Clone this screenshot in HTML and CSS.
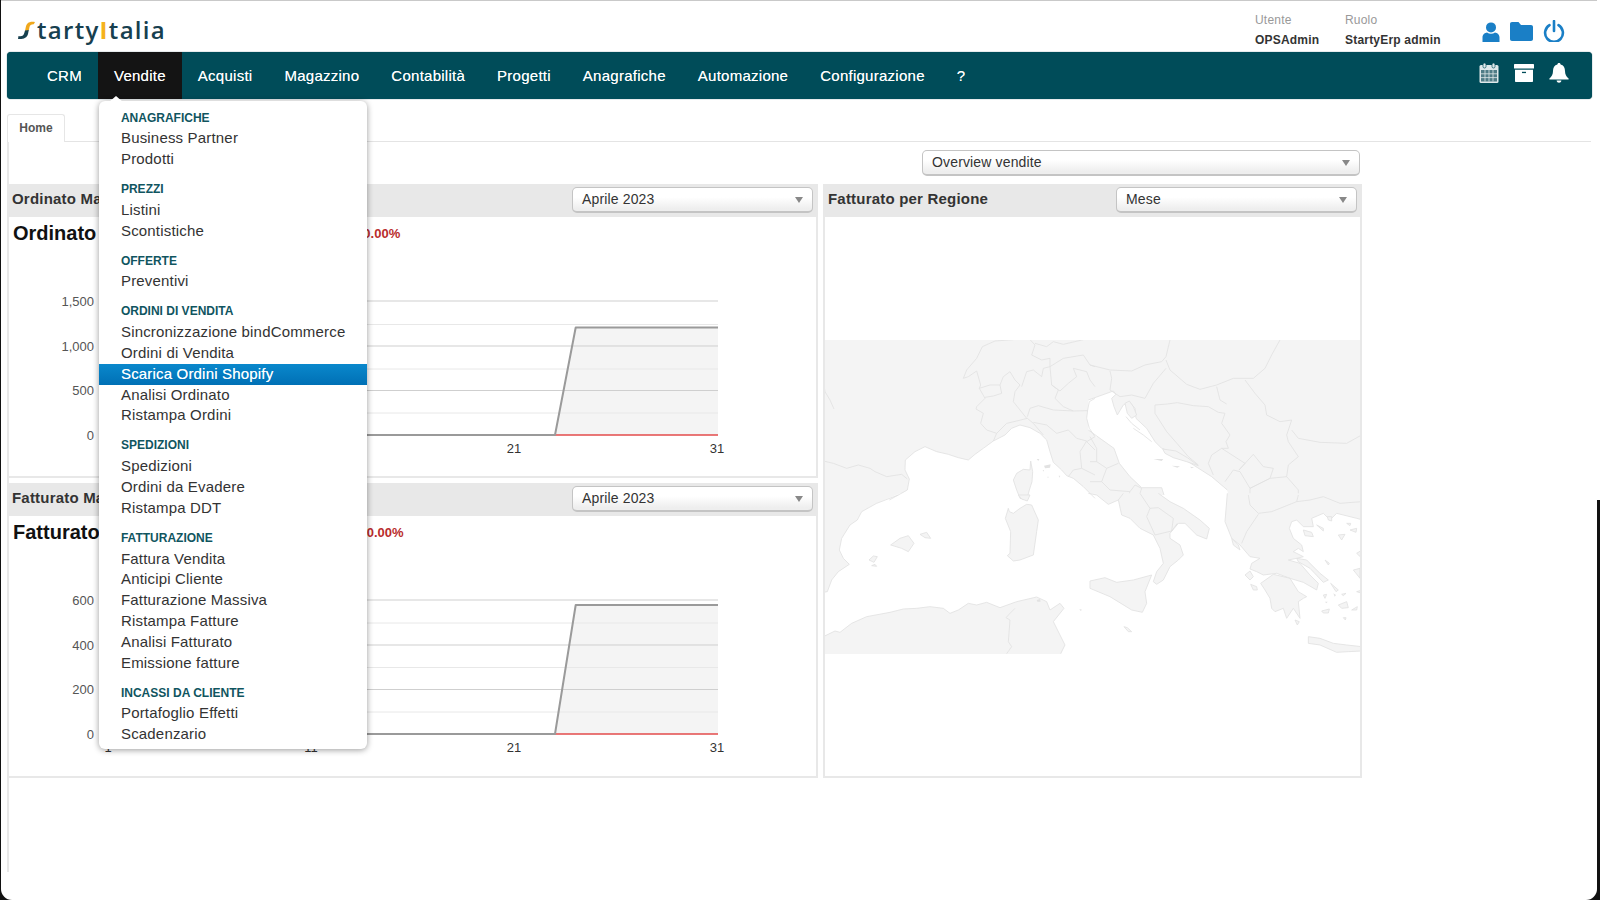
FILE: index.html
```html
<!DOCTYPE html>
<html lang="it">
<head>
<meta charset="utf-8">
<title>StartyItalia</title>
<link rel="stylesheet" href="styles.css">
</head>
<body>
<div class="page">
  <header class="top">
    <div class="logo">
      <svg class="logo-s" viewBox="0 0 18 20" width="18" height="20"><path class="s-y" d="M17 1C11 0 8.5 2.5 7.8 6L7 10 10.8 9.5 11.5 6C12 4 13.5 3 15.8 3.2Z"/><path class="s-d" d="M7 9.5 6.3 12C5.8 14.5 3.5 16 0.5 15L0 18C5 18.5 9 17 10 13L10.8 9Z"/></svg>
      <span class="logo-text">tarty<span class="logo-bar">I</span>talia</span>
    </div>
    <div class="userinfo">
      <div class="info info-user"><span class="info-l">Utente</span><b>OPSAdmin</b></div>
      <div class="info info-role"><span class="info-l">Ruolo</span><b>StartyErp admin</b></div>
      <div class="topicons">
        <svg class="ic-user" viewBox="0 0 18 20" width="18" height="20"><circle cx="9" cy="5.4" r="5"/><path d="M0.5 20V15.5C0.5 12.5 3 10.8 5 10.6 6.2 11.4 7.5 11.8 9 11.8S11.8 11.4 13 10.6C15 10.8 17.5 12.5 17.5 15.5V20Z"/></svg>
        <svg class="ic-folder" viewBox="0 0 23 19" width="23" height="19"><path d="M2 0H8.5L11 3H21C22.2 3 23 3.8 23 5V17C23 18.2 22.2 19 21 19H2C0.8 19 0 18.2 0 17V2C0 0.8 0.8 0 2 0Z"/></svg>
        <svg class="ic-power" viewBox="0 0 22 22" width="22" height="22"><path d="M6.5 5.2A8.9 8.9 0 1 0 15.5 5.2"/><path d="M11 1V11"/></svg>
      </div>
    </div>
  </header>

  <nav class="nav">
    <ul class="nav-list">
      <li class="nav-item">CRM</li>
      <li class="nav-item nav-active">Vendite
        <div class="menu">
          <div class="m-group">
            <div class="m-head">Anagrafiche</div>
            <div class="m-item">Business Partner</div>
            <div class="m-item">Prodotti</div>
          </div>
          <div class="m-group">
            <div class="m-head">Prezzi</div>
            <div class="m-item">Listini</div>
            <div class="m-item">Scontistiche</div>
          </div>
          <div class="m-group">
            <div class="m-head">Offerte</div>
            <div class="m-item">Preventivi</div>
          </div>
          <div class="m-group">
            <div class="m-head">Ordini di vendita</div>
            <div class="m-item">Sincronizzazione bindCommerce</div>
            <div class="m-item">Ordini di Vendita</div>
            <div class="m-item m-sel">Scarica Ordini Shopify</div>
            <div class="m-item">Analisi Ordinato</div>
            <div class="m-item">Ristampa Ordini</div>
          </div>
          <div class="m-group">
            <div class="m-head">Spedizioni</div>
            <div class="m-item">Spedizioni</div>
            <div class="m-item">Ordini da Evadere</div>
            <div class="m-item">Ristampa DDT</div>
          </div>
          <div class="m-group">
            <div class="m-head">Fatturazione</div>
            <div class="m-item">Fattura Vendita</div>
            <div class="m-item">Anticipi Cliente</div>
            <div class="m-item">Fatturazione Massiva</div>
            <div class="m-item">Ristampa Fatture</div>
            <div class="m-item">Analisi Fatturato</div>
            <div class="m-item">Emissione fatture</div>
          </div>
          <div class="m-group">
            <div class="m-head">Incassi da cliente</div>
            <div class="m-item">Portafoglio Effetti</div>
            <div class="m-item">Scadenzario</div>
          </div>
        </div>
      </li>
      <li class="nav-item">Acquisti</li>
      <li class="nav-item">Magazzino</li>
      <li class="nav-item">Contabilità</li>
      <li class="nav-item">Progetti</li>
      <li class="nav-item">Anagrafiche</li>
      <li class="nav-item">Automazione</li>
      <li class="nav-item">Configurazione</li>
      <li class="nav-item">?</li>
    </ul>
    <div class="nav-icons">
      <svg class="ic-cal" viewBox="0 0 20 20" width="20" height="20"><rect class="cal-bg" x="0.5" y="2" width="19" height="18" rx="1.5"/><rect class="cal-grid" x="2" y="7" width="16" height="11.5"/><path class="cal-lines" d="M6 7V18.5M10 7V18.5M14 7V18.5M2 10.8H18M2 14.6H18"/><rect class="cal-ring" x="4" y="0" width="3" height="5" rx="1.5"/><rect class="cal-ring" x="13" y="0" width="3" height="5" rx="1.5"/></svg>
      <svg class="ic-arch" viewBox="0 0 20 18" width="20" height="18"><rect class="wh" x="0" y="0" width="20" height="4.5" rx="0.6"/><path class="wh" d="M1 5.8H19V17C19 17.6 18.6 18 18 18H2C1.4 18 1 17.6 1 17Z"/><rect class="teal" x="8" y="7.8" width="4" height="1.3"/></svg>
      <svg class="ic-bell" viewBox="0 0 20 20" width="20" height="20"><path class="wh" d="M10 0C11 0 11.6 0.7 11.6 1.6 14.6 2.3 16 4.8 16 8 16 11.5 17.2 13.5 19.6 15.6V16.6H0.4V15.6C2.8 13.5 4 11.5 4 8 4 4.8 5.4 2.3 8.4 1.6 8.4 0.7 9 0 10 0Z"/><path class="wh" d="M7.6 17.6H12.4C12.2 19 11.2 19.8 10 19.8S7.8 19 7.6 17.6Z"/></svg>
    </div>
  </nav>

  <div class="tabs"><div class="tab">Home</div></div>

  <main class="content">
    <div class="toolbar">
      <div class="select select-wide"><span>Overview vendite</span><i class="caret"></i></div>
    </div>
    <div class="dash">
      <div class="col">
        <section class="panel panel-l panel-a">
          <div class="p-head"><h3>Ordinato Ma</h3><div class="select"><span>Aprile 2023</span><i class="caret"></i></div></div>
          <div class="p-title"><strong>Ordinato</strong><em>0.00%</em></div>
          <svg class="chart" viewBox="9 241 807 235" width="807" height="235">
            <polygon class="c-area" points="555,435 575.7,327.5 718,327.5 718,435"/>
            <path class="c-minor" d="M108 324.5H718M108 369H718M108 413H718"/>
            <path class="c-major" d="M108 301H718M108 346H718M108 390.5H718"/>
            <path class="c-red" d="M108 435H718"/>
            <polyline class="c-line" points="108,435 555,435 575.7,327.5 718,327.5"/>
            <text class="c-y" x="94" y="306">1,500</text>
            <text class="c-y" x="94" y="351">1,000</text>
            <text class="c-y" x="94" y="395">500</text>
            <text class="c-y" x="94" y="440">0</text>
            <text class="c-x" x="108" y="453">1</text>
            <text class="c-x" x="311" y="453">11</text>
            <text class="c-x" x="514" y="453">21</text>
            <text class="c-x" x="717" y="453">31</text>
          </svg>
        </section>
        <section class="panel panel-l panel-b">
          <div class="p-head"><h3>Fatturato Ma</h3><div class="select"><span>Aprile 2023</span><i class="caret"></i></div></div>
          <div class="p-title"><strong>Fatturato</strong><em>0.00%</em></div>
          <svg class="chart" viewBox="9 540 807 236" width="807" height="236">
            <polygon class="c-area" points="555,734 575.7,605 718,605 718,734"/>
            <path class="c-minor" d="M108 623H718M108 667.5H718M108 712H718"/>
            <path class="c-major" d="M108 600H718M108 645H718M108 689.5H718"/>
            <path class="c-red" d="M108 734H718"/>
            <polyline class="c-line" points="108,734 555,734 575.7,605 718,605"/>
            <text class="c-y" x="94" y="605">600</text>
            <text class="c-y" x="94" y="650">400</text>
            <text class="c-y" x="94" y="694">200</text>
            <text class="c-y" x="94" y="739">0</text>
            <text class="c-x" x="108" y="752">1</text>
            <text class="c-x" x="311" y="752">11</text>
            <text class="c-x" x="514" y="752">21</text>
            <text class="c-x" x="717" y="752">31</text>
          </svg>
        </section>
      </div>
      <section class="panel panel-r">
        <div class="p-head"><h3>Fatturato per Regione</h3><div class="select"><span>Mese</span><i class="caret"></i></div></div>
        <svg class="map" viewBox="825 340 535 314" width="535" height="314">
          <rect class="land-f" x="825" y="340" width="535" height="314"/>
          <g transform="translate(820,335) scale(.33333)">
            <polygon class="sea" points="208,500 262,465 268,432 255,405 256,375 285,350 315,335 350,350 385,358 415,368 445,375 465,358 490,340 520,318 555,300 575,280 600,270 630,278 660,295 680,315 690,350 700,382 725,405 740,422 760,430 790,455 830,495 830,500"/>
            <polygon class="sea" points="830,188 808,200 803,225 800,250 808,280 830,308"/>
          </g>
          <g transform="translate(1090,335) scale(.33333)">
            <polygon class="sea" points="-5,195 70,168 78,178 65,190 72,215 82,240 100,210 118,200 135,220 138,250 170,280 195,320 215,340 255,355 310,390 365,425 412,465 418,500 222,500 222,480 215,458 155,458 120,425 88,385 72,340 30,310 -5,285"/>
          </g>
          <g transform="translate(820,495) scale(.33333)">
            <polygon class="sea" points="240,-5 170,25 125,50 112,75 90,90 65,130 58,165 70,190 88,208 55,230 35,255 22,290 10,292 10,425 45,408 60,412 95,385 140,365 210,352 250,342 290,340 330,335 370,340 390,355 415,345 445,325 470,330 500,322 540,338 590,320 650,306 680,320 690,345 720,325 732,340 700,380 720,420 735,450 722,480 830,480 830,-5"/>
          </g>
          <rect class="sea" x="1090" y="495" width="275" height="165"/>
          <g transform="translate(820,335) scale(.33333)">
            <polyline class="ln" points="208,495 262,465 268,432 255,405 256,375 285,350 315,335 350,350 385,358 415,368 445,375 465,358 490,340 520,318 555,300 575,280 600,270 630,278 660,295 680,315 690,350 700,382 725,405 740,422 760,430 790,455 825,490"/>
            <polyline class="ln" points="825,190 808,200 803,225 800,250 808,280 825,305"/>
            <polygon class="isl" points="632,378 630,405 610,403 590,415 580,435 590,465 600,490 620,495 628,465 636,440 638,410"/>
            <polyline class="ln" points="430,130 440,105 470,70 487,35 525,18 580,14"/>
            <polyline class="ln" points="430,130 445,125 470,108 482,150 478,160 495,190 470,215 468,222 490,235 482,265 500,285 530,295 520,318"/>
            <polyline class="ln" points="478,160 510,150 540,150 545,175 520,183 495,187"/>
            <polyline class="ln" points="540,150 550,125 570,110 585,135 600,150 585,170 580,200 600,225 620,250"/>
            <polyline class="ln" points="605,155 620,110 640,105 665,125 670,100 690,95 695,150 715,165 705,190 730,215 760,228"/>
            <polyline class="ln" points="530,295 560,265 590,258 622,250 640,265 670,300"/>
            <polyline class="ln" points="622,245 630,220 655,212 700,225 760,228 803,227"/>
            <polyline class="ln" points="640,262 680,270 710,295 745,285 770,310 800,318"/>
            <polyline class="ln" points="800,318 780,350 785,400 760,405 745,425"/>
            <polyline class="ln" points="825,305 800,320 825,345"/>
            <polyline class="ln" points="785,400 825,420"/>
            <polyline class="ln" points="695,150 720,168 745,145 770,125 760,100 800,110 810,135 825,155"/>
            <polyline class="ln" points="690,95 730,70 790,60 810,90 825,95"/>
            <polyline class="ln" points="630,14 645,30 635,60 665,75 690,70 690,95"/>
            <polyline class="ln" points="645,25 680,35 700,20 730,28 790,14"/>
            <polyline class="ln" points="10,378 40,385 80,400 115,390 150,400 165,410 200,425 245,418 262,432"/>
            <polyline class="ln" points="10,140 15,170 30,195 42,222"/>
            <polygon class="dot" points="650,372 658,372 655,378"/>
            <polygon class="dot" points="672,392 692,388 690,398 675,400"/>
            <polygon class="dot" points="668,405 672,405 670,410"/>
            <polygon class="dot" points="682,425 686,425 684,430"/>
            <polygon class="dot" points="716,422 721,422 718,428"/>
          </g>
          <g transform="translate(1090,335) scale(.33333)">
            <polyline class="ln" points="-5,195 70,168 78,178 65,190 72,215 82,240 100,210 118,200 135,220 138,250 170,280 195,320 215,340 255,355 310,390 365,425 412,465"/>
            <polyline class="ln" points="-5,285 30,310 72,340 88,385 120,425 155,458 215,458 222,480"/>
            <polyline class="ln" points="0,90 60,105 125,108 165,90 215,80 228,65 240,15"/>
            <polyline class="ln" points="228,75 240,105 290,148 330,163 380,150 430,130 490,130 525,100 545,60 570,15"/>
            <polyline class="ln" points="60,108 65,130 60,165 90,185 125,180 165,190 190,145 228,100"/>
            <polyline class="ln" points="380,155 390,195 410,207"/>
            <polyline class="ln" points="195,210 195,235 230,290 265,330 295,365 325,390"/>
            <polyline class="ln" points="195,210 232,207 262,203 310,212 355,215 385,232 405,235 395,265 420,300 408,320 415,340 395,340"/>
            <polyline class="ln" points="465,135 495,175 525,210 530,240 570,260 605,255 590,300 595,320 625,365 595,390 590,425"/>
            <polyline class="ln" points="605,285 625,310 690,322 770,325 815,300"/>
            <polyline class="ln" points="395,340 365,360 355,385 370,420"/>
            <polyline class="ln" points="395,340 465,385 447,405"/>
            <polyline class="ln" points="447,405 490,358 520,395 550,400 540,430 480,460"/>
            <polyline class="ln" points="405,440 430,405 450,410 480,460 480,495"/>
            <polyline class="ln" points="480,460 540,430 590,425 625,465 625,495"/>
            <polyline class="ln" points="640,495 690,485 720,495"/>
            <polyline class="ln" points="800,490 815,470"/>
            <polyline class="ln" points="0,305 20,340 20,380 50,400 35,440 60,465 120,470 135,450 155,460"/>
            <polyline class="ln" points="50,400 85,385"/>
            <polyline class="ln" points="145,490 155,460"/>
            <polyline class="ln" points="0,380 20,380"/>
            <polyline class="ln" points="0,440 35,440"/>
            <polyline class="ln" points="120,470 110,495"/>
            <polygon class="isl" points="105,205 118,198 130,215 140,240 125,250 112,235"/>
            <polyline class="ln" points="108,245 125,265 150,285"/>
            <polyline class="ln" points="130,280 160,300 185,320"/>
            <polygon class="isl" points="218,342 258,348 292,368 325,392 290,380 250,368 225,355"/>
            <polygon class="dot" points="190,372 220,372 215,378"/>
            <polygon class="dot" points="245,392 270,394 262,398"/>
            <polygon class="dot" points="300,395 312,397 305,400"/>
          </g>
          <g transform="translate(820,495) scale(.33333)">
            <polyline class="ln" points="235,0 170,25 125,50 112,75 90,90 65,130 58,165 70,190 88,208 55,230 35,255 22,290 10,292"/>
            <polyline class="ln" points="10,425 45,408 60,412 95,385 140,365 210,352 250,342 290,340 330,335 370,340 390,355 415,345 445,325 470,330 500,322 540,338 590,320 650,306 680,320 690,345 720,325 732,340 700,380 720,420 735,450 722,476"/>
            <polyline class="ln" points="585,340 570,355 558,368 570,375 565,440 575,455 560,476"/>
            <polygon class="isl" points="565,40 556,70 572,110 570,175 562,182 580,198 600,195 640,180 650,110 655,75 635,30 620,28 600,40 580,55 568,50"/>
            <polygon class="isl" points="212,150 240,130 265,122 282,145 265,170 245,160"/>
            <polygon class="isl" points="300,118 320,112 332,130 315,128"/>
            <polygon class="isl" points="147,195 160,183 172,185 162,202"/>
            <polygon class="isl" points="155,212 165,208 170,214"/>
            <polygon class="isl" points="595,0 605,12 622,18 630,0"/>
            <polygon class="dot" points="778,342 786,344 782,348"/>
            <polygon class="dot" points="650,315 660,312 662,320 652,320"/>
          </g>
          <g transform="translate(1090,495) scale(.33333)">
            <polygon class="land-f" points="-5,-5 20,0 55,28 85,15 95,60 120,70 150,100 190,120 210,160 220,205 200,230 190,260 200,268 220,255 240,215 265,195 280,180 270,150 240,130 240,115 265,85 285,85 320,120 350,132 358,100 330,75 280,40 240,20 205,-5"/>
            <polyline class="ln" points="-5,-5 20,0 55,28 85,15 95,60 120,70 150,100 190,120 210,160 220,205 200,230 190,260 200,268 220,255 240,215 265,195 280,180 270,150 240,130 240,115 265,85 285,85 320,120 350,132 358,100 330,75 280,40 240,20 205,-5"/>
            <polyline class="ln" points="85,15 100,-5"/>
            <polyline class="ln" points="150,-5 180,40 170,65 195,120 245,108 262,85"/>
            <polyline class="ln" points="180,40 205,38 250,70 245,108"/>
            <polygon class="isl" points="0,258 45,248 80,262 130,255 185,240 165,290 170,325 157,352 125,345 60,305 0,280"/>
            <polygon class="isl" points="102,395 112,398 125,410 115,410"/>
            <polygon class="land-f" points="412,-5 405,80 425,130 450,150 480,185 510,190 485,205 480,222 500,230 520,240 560,235 600,250 640,262 680,285 685,265 660,240 630,205 595,195 620,190 640,185 610,170 625,160 640,170 635,150 610,130 598,100 605,80 620,75 640,95 670,95 665,70 700,55 720,75 740,55 800,70 818,75 818,-5"/>
            <polyline class="ln" points="412,-5 405,80 425,130 450,150 480,185 510,190 485,205 480,222 500,230 520,240 560,235 600,250 640,262 680,285 685,265 660,240 630,205 595,195 620,190 640,185 610,170 625,160 640,170 635,150 610,130 598,100 605,80 620,75 640,95 670,95 665,70 700,55 720,75 740,55 800,70 818,75"/>
            <polygon class="isl" points="620,190 650,195 690,235 715,255 700,262 660,220 625,200"/>
            <polygon class="isl" points="512,265 550,238 600,250 625,290 650,305 640,310 625,320 630,370 610,340 590,370 580,340 555,350 545,340 540,310 525,285"/>
            <polygon class="isl" points="655,425 690,430 730,445 770,450 815,455 815,468 775,470 740,472 690,450 655,445"/>
            <polygon class="isl" points="425,130 445,150 450,165 430,150"/>
            <polygon class="isl" points="465,240 480,228 490,245 480,255"/>
            <polygon class="isl" points="482,268 500,275 502,285 490,285"/>
            <polygon class="isl" points="615,375 628,380 622,390"/>
            <polygon class="isl" points="640,105 665,112 670,125 645,122"/>
            <polygon class="isl" points="680,90 700,100 700,108"/>
            <polygon class="isl" points="712,65 725,65 725,78 715,75"/>
            <polygon class="isl" points="770,85 782,85 780,92"/>
            <polygon class="isl" points="780,105 800,100 798,112"/>
            <polygon class="isl" points="745,120 765,118 755,135"/>
            <polygon class="isl" points="800,175 816,165 816,190"/>
            <polygon class="isl" points="790,225 810,220 810,250"/>
            <polygon class="isl" points="800,290 816,285 816,295"/>
            <polygon class="isl" points="705,195 718,205 715,210"/>
            <polygon class="isl" points="722,265 745,285 738,290"/>
            <polygon class="isl" points="745,330 770,320 775,338 755,340"/>
            <polygon class="isl" points="785,345 802,335 800,345"/>
            <polygon class="isl" points="695,348 718,342 715,354 700,354"/>
            <polygon class="isl" points="700,300 710,298 705,310"/>
            <polygon class="isl" points="755,298 768,295 760,302"/>
            <polygon class="isl" points="760,368 768,368 766,375"/>
            <polygon class="dot" points="730,295 738,300 734,305"/>
            <polygon class="dot" points="705,320 713,320 709,325"/>
            <polyline class="ln" points="475,0 480,30 505,55 545,50 620,20 660,15 700,5 750,25 815,20"/>
            <polyline class="ln" points="505,58 470,110 455,145"/>
            <polyline class="ln" points="625,0 620,20"/>
          </g>
        </svg>
      </section>
    </div>
  </main>
</div>
</body>
</html>
```
FILE: styles.css
```css
* { box-sizing: border-box; }
html { background: linear-gradient(#fff 0, #fff 500px, #111 500px) no-repeat; height: 900px; }
body { margin: 0; height: 900px; overflow: hidden; font-family: "Liberation Sans", Arial, sans-serif; color: #333; }
.page { margin-left: 1px; width: 1596px; height: 900px; background: #fff; border-radius: 0 0 11px 11px; border-top: 1px solid #c9c9c9; position: relative; }
html::before { content: ""; position: fixed; left: 0; top: 0; bottom: 0; width: 1px; background: #111; }

/* header */
.top { height: 51px; display: flex; justify-content: space-between; }
.logo { display: flex; align-items: flex-start; padding: 13px 0 0 17px; }
.logo-s { margin-top: 7px; }
.s-y { fill: #f0a81c; }
.s-d { fill: #17404f; }
.logo-text { font-family: "Open Sans", sans-serif; font-weight: 600; font-size: 24px; line-height: 32px; letter-spacing: 1.3px; color: #17404f; margin-left: 1px; }
.logo-bar { color: #f5b21d; font-weight: 700; }
.userinfo { display: flex; padding-top: 12px; }
.info { display: flex; flex-direction: column; font-size: 12px; letter-spacing: .2px; }
.info-l { color: #999; line-height: 14px; }
.info b { color: #333; line-height: 14px; margin-top: 6px; }
.info-user { width: 90px; }
.info-role { width: 137px; }
.topicons { display: flex; gap: 10px; width: 115px; align-items: flex-start; padding-top: 9px; }
.topicons svg { fill: #1a7fc6; }
.ic-power { fill: none !important; stroke: #1a7fc6; stroke-width: 2.6; stroke-linecap: round; margin-top: -2px; }

/* nav */
.nav { margin-left: 6px; width: 1585px; height: 47px; background: #004c59; border-radius: 4px; display: flex; justify-content: space-between; box-shadow: 0 0 1px #003a45; }
.nav-list { list-style: none; margin: 0; padding: 0 0 0 24px; display: flex; }
.nav-item { color: #fff; font-size: 15px; letter-spacing: .26px; line-height: 47px; padding: 0 16px; position: relative; text-shadow: 0 0 .6px rgba(255,255,255,.7); }
.nav-active { background: #141414; }
.nav-icons { display: flex; gap: 15px; padding: 11px 23px 0 0; align-items: flex-start; }
.wh { fill: #fff; }
.teal { fill: #004c59; }
.cal-bg { fill: #dfe8ea; }
.cal-grid { fill: #4f7c86; }
.cal-lines { stroke: #dfe8ea; stroke-width: .8; fill: none; }
.cal-ring { fill: #dfe8ea; stroke: #004c59; stroke-width: .7; }
.ic-arch { margin-top: 1px; }

/* dropdown */
.menu { position: absolute; left: 1px; top: 49px; width: 268px; height: 648px; background: #fff; border-radius: 6px; box-shadow: 0 1px 6px rgba(0,0,0,.4); padding-top: 6.5px; text-shadow: none; letter-spacing: 0; z-index: 5; }
.menu::before { content: ""; position: absolute; left: 10px; top: -5px; border: 7px solid transparent; border-top: 0; border-bottom: 6px solid #fff; }
.m-group { margin-bottom: 9.2px; }
.m-head { font-size: 12px; font-weight: 700; text-transform: uppercase; color: #10555f; line-height: 20.8px; padding-left: 22px; }
.m-item { font-size: 15px; letter-spacing: .18px; line-height: 20.8px; color: #333; padding-left: 22px; }
.m-sel { color: #fff; background: linear-gradient(#0a88cc, #0070b5); text-shadow: 0 0 .6px rgba(255,255,255,.7); }

/* tabs */
.tabs { margin: 15px 0 0 6px; width: 1584px; height: 28px; border-bottom: 1px solid #e4e4e4; }
.tab { width: 58px; height: 28px; background: #fff; border: 1px solid #e6e6e6; border-bottom: 0; border-radius: 3px 3px 0 0; font-size: 12px; font-weight: 700; color: #555; line-height: 26px; text-align: center; }

/* content */
.content { margin-left: 6px; width: 1400px; height: 730px; border-left: 2px solid #e8e8e8; }
.toolbar { width: 1351px; padding-top: 8px; display: flex; justify-content: flex-end; }
.select { position: relative; width: 241px; height: 26px; border: 1px solid #c4c4c4; border-bottom: 2px solid #c4c4c4; border-radius: 5px; background: linear-gradient(#fff, #fff 40%, #eee 90%); font-size: 14px; letter-spacing: .15px; line-height: 23px; padding-left: 9px; color: #333; }
.select-wide { width: 438px; }
.caret { position: absolute; right: 9px; top: 9px; border: 4px solid transparent; border-top: 6px solid #888; border-bottom: 0; }
.dash { display: grid; grid-template-columns: 809px 539px; column-gap: 5px; margin-top: 8px; }
.col { display: flex; flex-direction: column; gap: 5px; }
.panel { border: 2px solid #e8e8e8; background: #fff; }
.panel-l { border-left: 0; }
.panel-a { height: 294px; }
.panel-b { height: 295px; }
.panel-r { height: 594px; }
.p-head { height: 31px; background: #e8e8e8; display: flex; justify-content: space-between; padding: 1px 3px 0 3px; }
.p-head h3 { margin: 0; font-size: 15px; font-weight: 700; letter-spacing: .2px; line-height: 24px; color: #333; }
.p-title { height: 24px; display: flex; align-items: baseline; padding: 5px 0 0 4px; line-height: 23px; }
.p-title strong { font-size: 20px; color: #111; }
.p-title em { font-style: normal; font-weight: 700; font-size: 13px; color: #b92c2c; margin-left: 267px; position: relative; top: -2px; }
.chart { display: block; }
.c-area { fill: #f4f4f4; }
.c-minor { stroke: #e8e8e8; stroke-width: 1; fill: none; }
.c-major { stroke: #cfcfcf; stroke-width: 1; fill: none; }
.c-red { stroke: #e34b4b; stroke-width: 1.5; fill: none; }
.c-line { stroke: #9a9a9a; stroke-width: 2; fill: none; stroke-linejoin: round; }
.c-y { font-size: 13px; fill: #555; text-anchor: end; }
.c-x { font-size: 13px; fill: #333; text-anchor: middle; }
.map { display: block; margin-top: 123px; }
.land-f { fill: #f4f4f4; }
.sea { fill: #fff; }
.ln { fill: none; stroke: #e2e2e2; stroke-width: 2.6; stroke-linejoin: round; }
.isl { fill: #f4f4f4; stroke: #e2e2e2; stroke-width: 2.6; stroke-linejoin: round; }
.dot { fill: #e2e2e2; }
```
